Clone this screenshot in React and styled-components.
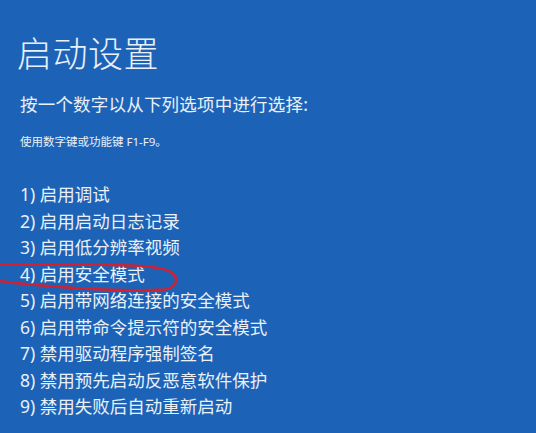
import React from 'react';
import styled, { createGlobalStyle } from 'styled-components';

const GlobalStyle = createGlobalStyle`
  html, body {
    margin: 0;
    padding: 0;
    background: #1c63b7;
  }
  body {
    font-family: "Noto Sans", "Noto Sans CJK SC", sans-serif;
    color: #eaf0f8;
  }
`;

const options = [
  '启用调试',
  '启用启动日志记录',
  '启用低分辨率视频',
  '启用安全模式',
  '启用带网络连接的安全模式',
  '启用带命令提示符的安全模式',
  '禁用驱动程序强制签名',
  '禁用预先启动反恶意软件保护',
  '禁用失败后自动重新启动',
];

export default function App() {
  return (
    <Screen>
      <GlobalStyle />
      <Title>启动设置</Title>
      <Prompt>按一个数字以从下列选项中进行选择:</Prompt>
      <Hint>使用数字键或功能键 F1-F9。</Hint>
      <OptionList>
        {options.map((text, i) => (
          <Option key={i}>
            {i + 1}) {text}
            {i === 3 && <Scribble />}
          </Option>
        ))}
      </OptionList>
    </Screen>
  );
}

// hand-drawn red loop around option 4
function Scribble() {
  return (
    <Mark width="190" height="34" viewBox="0 0 190 34">
      <path
        d="M0 3.5 C50 3 110 3.5 140 5 C160 6 172 10 175 15 C178 21 174 27 165 28.5 C140 30 110 29.5 60 26 C35 24 15 22 10 21.5 C6 21 3 20 0 20"
        fill="none"
        stroke="#d4202e"
        strokeWidth="2.5"
        strokeLinecap="round"
      />
    </Mark>
  );
}

const Screen = styled.div`
  width: 536px;
  height: 433px;
  box-sizing: border-box;
  padding: 29px 0 0 20px;
  overflow: hidden;
`;

const Title = styled.h1`
  margin: 0 0 0 -3px;
  font-size: 35px;
  font-weight: 300;
  line-height: 50px;
  letter-spacing: 0.5px;
`;

const Prompt = styled.div`
  margin-top: 13px;
  font-size: 17.5px;
  line-height: 24px;
  letter-spacing: 0.2px;
`;

const Hint = styled.div`
  margin-top: 18px;
  font-size: 11.5px;
  line-height: 16px;
`;

const OptionList = styled.ol`
  list-style: none;
  margin: 31px 0 0;
  padding: 0;
`;

const Option = styled.li`
  position: relative;
  font-size: 17.5px;
  line-height: 26.5px;
  height: 26.5px;
`;

const Mark = styled.svg`
  position: absolute;
  left: -20px;
  top: 0;
`;
